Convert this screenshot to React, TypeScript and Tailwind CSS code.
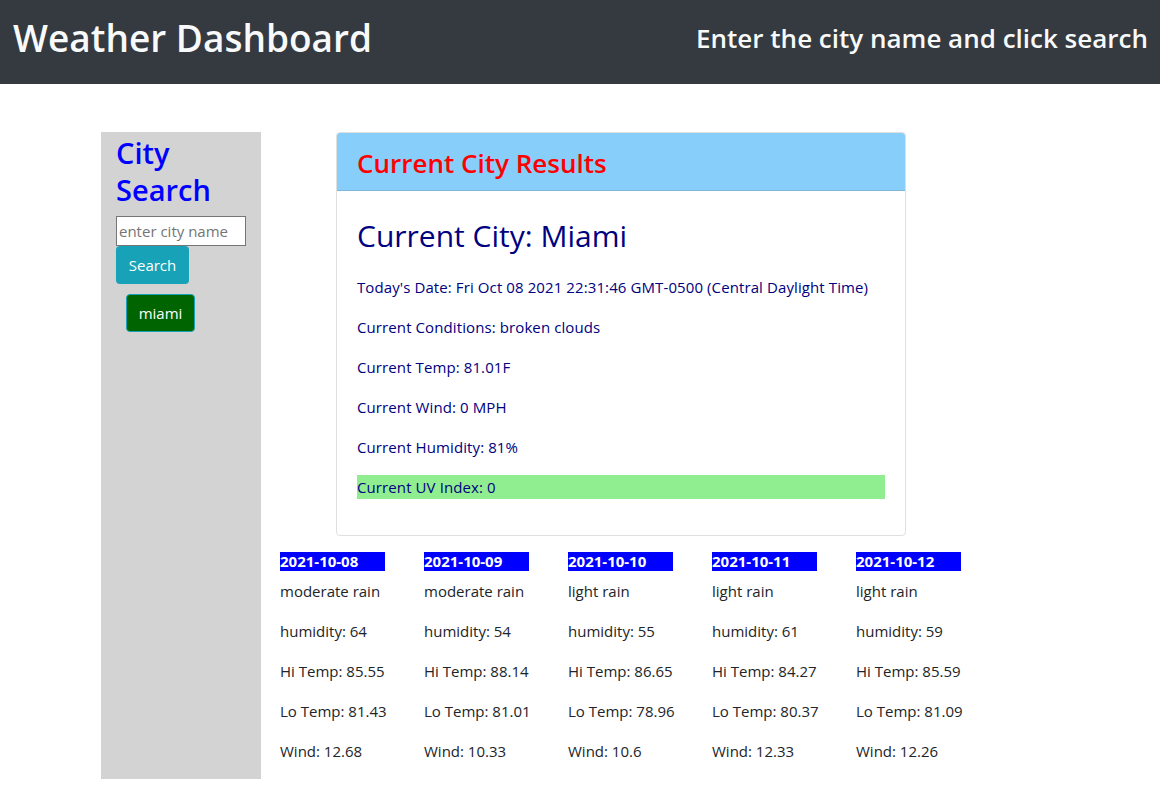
export default function App() {
  const forecast = [
    { date: "2021-10-08", desc: "moderate rain", hum: 64, hi: "85.55", lo: "81.43", wind: "12.68" },
    { date: "2021-10-09", desc: "moderate rain", hum: 54, hi: "88.14", lo: "81.01", wind: "10.33" },
    { date: "2021-10-10", desc: "light rain", hum: 55, hi: "86.65", lo: "78.96", wind: "10.6" },
    { date: "2021-10-11", desc: "light rain", hum: 61, hi: "84.27", lo: "80.37", wind: "12.33" },
    { date: "2021-10-12", desc: "light rain", hum: 59, hi: "85.59", lo: "81.09", wind: "12.26" },
  ];

  return (
    <div className="min-h-[812px] bg-white font-['Open_Sans',sans-serif] text-[16px] leading-[24px] text-[#212529]">
      <header className="flex h-[84px] items-center justify-between bg-[#343a40] pb-[8px] pl-[13px] pr-[12px] text-[#f8f9fa]">
        <h1 className="text-[37px] leading-[44px] font-semibold">Weather Dashboard</h1>
        <h3 className="text-[26px] leading-[32px] font-semibold">Enter the city name and click search</h3>
      </header>

      <main className="flex pl-[101px] pt-[48px]">
        <aside className="w-[160px] bg-[#d3d3d3] px-[15px]">
          <h2 className="pt-[2px] text-[29px] leading-[37px] font-semibold text-[#0000ff]">
            City
            <br />
            Search
          </h2>
          <input
            type="text"
            placeholder="enter city name"
            className="mt-[8px] block h-[30px] w-[130px] border border-[#767676] bg-white px-[2px] text-[15px] placeholder:text-[#757575]"
          />
          <button className="block h-[38px] w-[73px] rounded-[4px] bg-[#17a2b8] text-[15px] text-white">
            Search
          </button>
          <button className="ml-[10px] mt-[10px] block h-[38px] w-[69px] rounded-[4px] border border-[#17a2b8] bg-[#006400] text-[15px] text-white">
            miami
          </button>
        </aside>

        <section className="flex flex-col">
          <div className="ml-[75px] w-[570px] overflow-hidden rounded-[4px] border border-[#dfdfdf]">
            <div className="flex h-[58px] items-center border-b border-[#7fb6d9] bg-[#87cefa] px-[20px] pt-[2px]">
              <h4 className="text-[26px] leading-[30px] font-semibold text-[#ff0000]">Current City Results</h4>
            </div>
            <div className="px-[20px] pb-[20px] pt-[26px] text-[#000080]">
              <h2 className="mb-[20px] text-[30px] leading-[38px]">Current City: Miami</h2>
              <p className="mb-[16px] text-[15px] tracking-[0.1px]">Today's Date: Fri Oct 08 2021 22:31:46 GMT-0500 (Central Daylight Time)</p>
              <p className="mb-[16px] text-[15px] tracking-[0.1px]">Current Conditions: broken clouds</p>
              <p className="mb-[16px] text-[15px] tracking-[0.1px]">Current Temp: 81.01F</p>
              <p className="mb-[16px] text-[15px] tracking-[0.1px]">Current Wind: 0 MPH</p>
              <p className="mb-[16px] text-[15px] tracking-[0.1px]">Current Humidity: 81%</p>
              <p className="mb-[16px] bg-[#90ee90] text-[15px] tracking-[0.1px]">Current UV Index: 0</p>
            </div>
          </div>

          <div className="ml-[19px] mt-[16px] flex">
            {forecast.map((d) => (
              <div key={d.date} className="w-[144px] text-[15px]">
                <h6 className="mb-[8px] h-[19px] w-[105px] bg-[#0000ff] text-[15px] leading-[19px] font-bold text-white">
                  {d.date}
                </h6>
                <p className="mb-[16px]">{d.desc}</p>
                <p className="mb-[16px]">humidity: {d.hum}</p>
                <p className="mb-[16px]">Hi Temp: {d.hi}</p>
                <p className="mb-[16px]">Lo Temp: {d.lo}</p>
                <p className="mb-[16px]">Wind: {d.wind}</p>
              </div>
            ))}
          </div>
        </section>
      </main>
    </div>
  );
}
